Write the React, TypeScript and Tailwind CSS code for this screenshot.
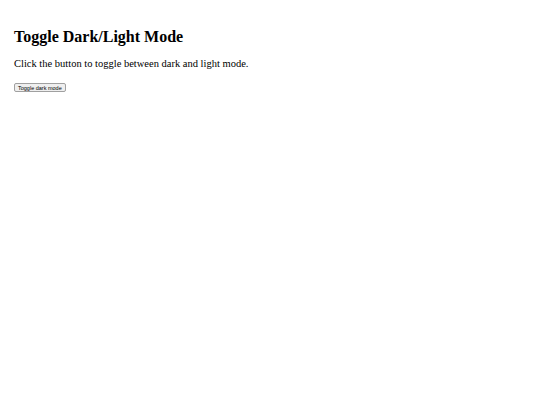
import { useState } from 'react'
import type { JSX } from 'react'

const App = (): JSX.Element => {
  const [dark, setDark] = useState<boolean>(false)

  return (
    <div
      className={`min-h-screen w-full px-[14px] pt-[27px] font-['Liberation_Serif',serif] ${
        dark ? 'bg-[#121212] text-white' : 'bg-white text-black'
      }`}
    >
      <h1 className="text-[16px] leading-[20px] font-bold">Toggle Dark/Light Mode</h1>
      <p className="mt-[11px] text-[10.5px] leading-[12px]">
        Click the button to toggle between dark and light mode.
      </p>
      <button
        className="mt-[13px] flex h-[9px] items-center rounded-[2px] border border-[#a0a0a0] bg-[#efefef] px-[3px] font-['Liberation_Sans',sans-serif] text-[5.5px] leading-[6px] text-black"
        onClick={(): void => {
          setDark(!dark)
        }}
      >
        Toggle dark mode
      </button>
    </div>
  )
}

export default App
